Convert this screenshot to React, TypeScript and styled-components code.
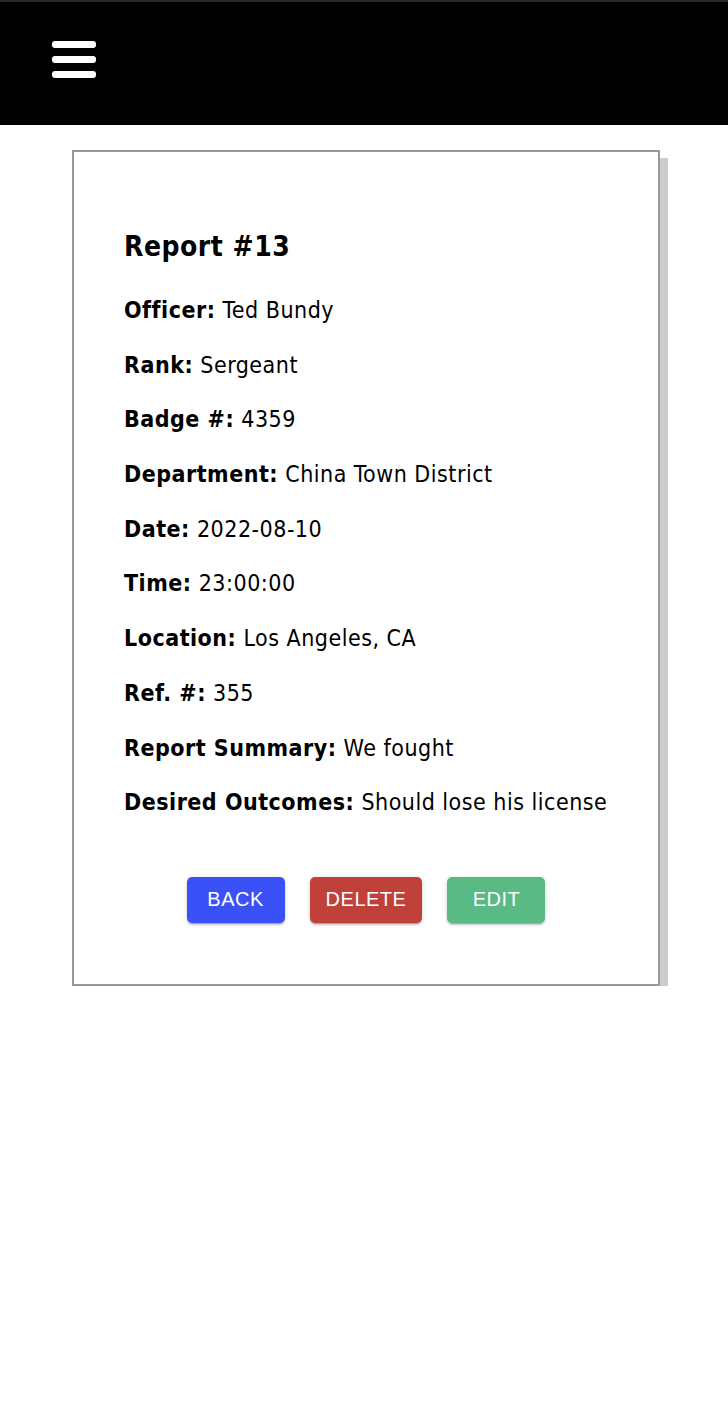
import styled, { createGlobalStyle } from "styled-components";

const GlobalStyle = createGlobalStyle`
    body {
        margin: 0;
        background: #fff;
        font-family: "DejaVu Sans Condensed", "DejaVu Sans", sans-serif;
    }
`

interface IField {
    label: string
    value: string
}

const report = {
    id: 13,
    fields: [
        { label: "Officer", value: "Ted Bundy" },
        { label: "Rank", value: "Sergeant" },
        { label: "Badge #", value: "4359" },
        { label: "Department", value: "China Town District" },
        { label: "Date", value: "2022-08-10" },
        { label: "Time", value: "23:00:00" },
        { label: "Location", value: "Los Angeles, CA" },
        { label: "Ref. #", value: "355" },
        { label: "Report Summary", value: "We fought" },
        { label: "Desired Outcomes", value: "Should lose his license" },
    ] as IField[],
}

const TopBar = styled.header`
    height: 123px;
    background: #000;
    border-top: 2px solid #2a2a2a;
    display: flex;
    align-items: center;
    padding-left: 52px;
`

const MenuButton = styled.button`
    background: none;
    border: none;
    padding: 0;
    margin-top: -8px;
    display: flex;
    flex-direction: column;
    gap: 8px;
    cursor: pointer;
`

const MenuBar = styled.span`
    display: block;
    width: 44px;
    height: 7px;
    border-radius: 3px;
    background: #fff;
`

const Card = styled.section`
    margin: 25px 0 0 72px;
    width: 588px;
    box-sizing: border-box;
    border: 2px solid #999999;
    box-shadow: 8px 8px 0 #cccccc;
    padding: 79px 0 61px 50px;
`

const Title = styled.h2`
    margin: 0 0 34px;
    font-size: 28px;
    letter-spacing: 0.5px;
    font-weight: bold;
    color: #000;
    line-height: 32px;
`

const Line = styled.p`
    margin: 0;
    height: 54.7px;
    font-size: 23px;
    letter-spacing: 0.5px;
    line-height: 26px;
    color: #000;

    b {
        font-weight: bold;
    }
`

const ButtonRow = styled.div`
    display: flex;
    justify-content: center;
    gap: 25px;
    margin: 33px 0 0 -50px;
`

const ActionButton = styled.button<{ color: string }>`
    height: 46px;
    min-width: 98px;
    padding: 0 16px;
    border: none;
    border-radius: 5px;
    background: ${props => props.color};
    color: #fff;
    font-family: "Liberation Sans", Arial, sans-serif;
    font-size: 20px;
    letter-spacing: 0.5px;
    text-transform: uppercase;
    box-shadow: 0 3px 1px -2px rgba(0,0,0,0.2), 0 2px 2px 0 rgba(0,0,0,0.14), 0 1px 5px 0 rgba(0,0,0,0.12);
    cursor: pointer;
`

export default function App() {
    return <>
        <GlobalStyle />
        <TopBar>
            <MenuButton type="button" aria-label="menu">
                <MenuBar />
                <MenuBar />
                <MenuBar />
            </MenuButton>
        </TopBar>
        <Card>
            <Title>Report #{report.id}</Title>
            {report.fields.map(field =>
                <Line key={field.label}>
                    <b>{field.label}:</b> {field.value}
                </Line>
            )}
            <ButtonRow>
                <ActionButton type="button" color="#3a51f7">Back</ActionButton>
                <ActionButton type="button" color="#c0403a">Delete</ActionButton>
                <ActionButton type="button" color="#5aba85">Edit</ActionButton>
            </ButtonRow>
        </Card>
    </>
}
